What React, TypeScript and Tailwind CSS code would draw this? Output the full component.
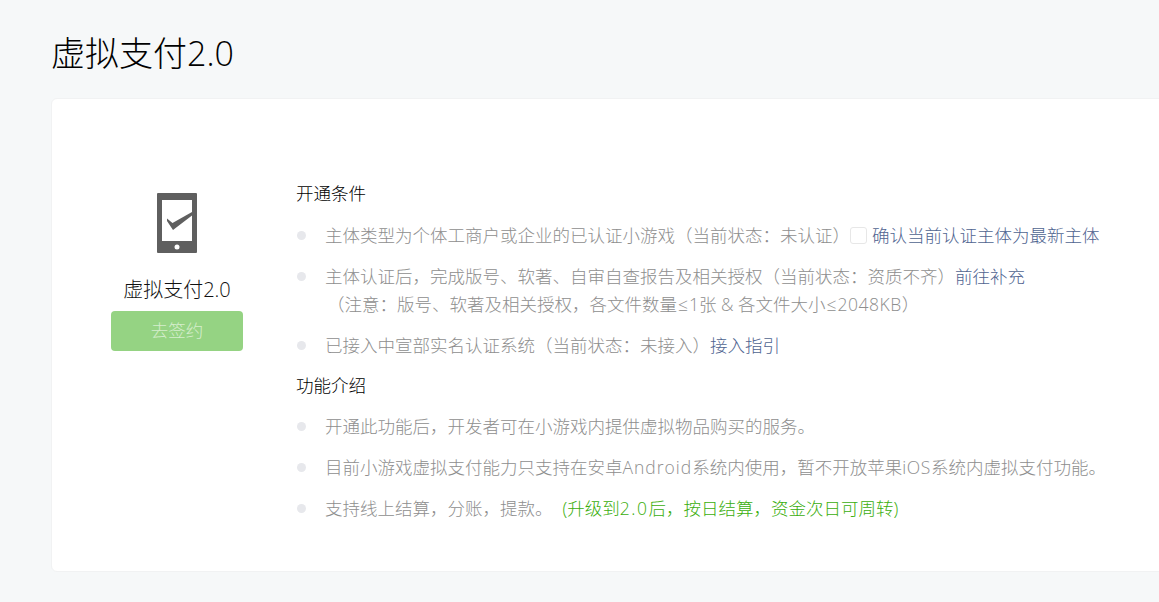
const font = { fontFamily: '"Open Sans", "Noto Sans CJK SC", sans-serif' };

function Bullet({ children }: { children: React.ReactNode }) {
  return (
    <li className="relative pl-[29px] mb-[13px] leading-[28px] text-[#8e8e8e]">
      <span className="absolute left-[1px] top-[10px] w-[9px] h-[9px] rounded-full bg-[#e7e8ec]" />
      {children}
    </li>
  );
}

function Link({ children }: { children: React.ReactNode }) {
  return <a className="text-[#4f6490]">{children}</a>;
}

function PhoneIcon() {
  return (
    <svg width="40" height="60" viewBox="0 0 40 60" className="block">
      <rect width="40" height="60" rx="1" fill="#5f5f5f" />
      <rect x="5" y="7" width="30" height="41" fill="#fff" />
      <circle cx="20" cy="54" r="2.5" fill="#fff" />
      <path d="M10 25.5 L15.5 30 L35 19 V22.5 L16 37 L10 28 Z" fill="#5f5f5f" />
    </svg>
  );
}

export default function App() {
  return (
    <div className="min-h-[602px] w-[1159px] overflow-hidden bg-[#f6f8f9] pl-[52px] pt-[25px] font-light" style={font}>
      <h1 className="text-[34px] leading-[56px] text-black font-light -ml-[1px]">虚拟支付2.0</h1>
      <div className="mt-[17px] -ml-px w-[1200px] h-[474px] bg-white rounded-l-[6px] border border-[#f1f2f3] flex pt-[80px]">
        <div className="w-[244px] pl-[59px] shrink-0 flex flex-col">
          <div className="w-[132px] flex flex-col items-center pt-[14px]">
            <PhoneIcon />
            <div className="mt-[21px] text-[20px] leading-[32px] text-[#111]">虚拟支付2.0</div>
            <button className="mt-[5px] w-[132px] h-[40px] rounded-[4px] bg-[#95d383] text-[#d5eecd] text-[17.5px] leading-[38px] pb-[2px]">去签约</button>
          </div>
        </div>
        <div className="text-[17.5px] text-black">
          <h2 className="leading-[28px] font-light mb-[14px]">开通条件</h2>
          <ul>
            <Bullet>
              主体类型为个体工商户或企业的已认证小游戏（当前状态：未认证）
              <span className="inline-block align-[-2px] w-[17px] h-[17px] mr-[5px] rounded-[3px] border border-[#e7e7e7] bg-white" />
              <Link>确认当前认证主体为最新主体</Link>
            </Bullet>
            <Bullet>
              主体认证后，完成版号、软著、自审自查报告及相关授权（当前状态：资质不齐）<Link>前往补充</Link>
              <br />
              <span className="ml-[2px]">
                （注意：版号、软著及相关授权，各文件数量<span className="mx-[1px]">≤</span>1张 &amp; 各文件大小<span className="mx-[1px]">≤</span>
                <span className="tracking-[0.5px]">2048KB</span>）
              </span>
            </Bullet>
            <Bullet>
              已接入中宣部实名认证系统（当前状态：未接入）<Link>接入指引</Link>
            </Bullet>
          </ul>
          <h2 className="-mt-px leading-[28px] font-light mb-[13px]">功能介绍</h2>
          <ul>
            <Bullet>开通此功能后，开发者可在小游戏内提供虚拟物品购买的服务。</Bullet>
            <Bullet>
              目前小游戏虚拟支付能力只支持在安卓<span className="tracking-[1px]">Android</span>系统内使用，暂不开放苹果<span className="tracking-[0.6px]">iOS</span>系统内虚拟支付功能。
            </Bullet>
            <Bullet>
              支持线上结算，分账，提款。
              <span className="ml-[10px] text-[#3aae0c]">
                (升级到<span className="tracking-[1.5px]">2.0</span>后，按日结算，资金次日可周转)
              </span>
            </Bullet>
          </ul>
        </div>
      </div>
    </div>
  );
}
